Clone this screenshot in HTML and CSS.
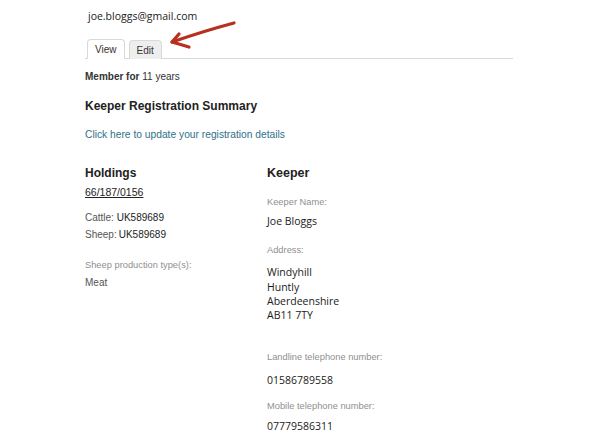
FILE: index.html
```html
<!DOCTYPE html>
<html>
<head>
<meta charset="utf-8">
<link rel="stylesheet" href="styles.css">
</head>
<body>
<div class="page">
  <div class="email">joe.bloggs@gmail.com</div>
  <div class="tabs">
    <span class="tab active">View</span>
    <span class="tab">Edit</span>
  </div>
  <svg class="arrow" width="80" height="40" viewBox="0 0 80 40">
    <path d="M70 9 Q40 17 8 28" fill="none" stroke="#b8301e" stroke-width="3.2" stroke-linecap="round"/>
    <path d="M15 20 L8 28 L25 33" fill="none" stroke="#b8301e" stroke-width="3.2" stroke-linecap="round" stroke-linejoin="round"/>
  </svg>
  <div class="member"><b>Member for</b> 11 years</div>
  <h2 class="summary">Keeper Registration Summary</h2>
  <a class="update" href="#">Click here to update your registration details</a>
  <div class="cols">
    <div class="col holdings">
      <h3 class="colhead">Holdings</h3>
      <div class="holding"><u>66/187/0156</u></div>
      <div class="herd"><span class="lab">Cattle:</span> UK589689</div>
      <div class="herd"><span class="lab tight">Sheep:</span>UK589689</div>
      <div class="label prod">Sheep production type(s):</div>
      <div class="meat">Meat</div>
    </div>
    <div class="col keeper">
      <h3 class="colhead">Keeper</h3>
      <div class="label first">Keeper Name:</div>
      <div class="value name">Joe Bloggs</div>
      <div class="label">Address:</div>
      <div class="value address">Windyhill<br>Huntly<br>Aberdeenshire<br>AB11 7TY</div>
      <div class="label landline">Landline telephone number:</div>
      <div class="value landnum">01586789558</div>
      <div class="label mobile">Mobile telephone number:</div>
      <div class="value">07779586311</div>
    </div>
  </div>
</div>
</body>
</html>
```
FILE: styles.css
```css
html, body {
  margin: 0;
  padding: 0;
  background: #ffffff;
}
body {
  font-family: "Liberation Sans", Arial, sans-serif;
  color: #333333;
}
.page {
  position: relative;
  margin-left: 85px;
  width: 428px;
}
.email {
  font-family: "Open Sans", "Noto Sans", sans-serif;
  font-size: 10.5px;
  color: #222222;
  padding-left: 3px;
  padding-top: 7px;
  line-height: 18px;
  height: 18px;
}
.tabs {
  display: flex;
  gap: 4px;
  margin-top: 14px;
  padding-left: 2px;
  border-bottom: 1px solid #d8d8d8;
  height: 19px;
  align-items: flex-end;
}
.tab {
  font-size: 10px;
  color: #333;
  height: 18px;
  line-height: 19px;
  padding: 0 7px;
  border: 1px solid #d9d9d9;
  border-bottom: none;
  border-radius: 4px 4px 0 0;
  background: #eeeeee;
  margin-bottom: -1px;
}
.tab.active {
  background: #ffffff;
  height: 19px;
}
.arrow {
  position: absolute;
  left: 79px;
  top: 14px;
}
.member {
  font-size: 10px;
  color: #333;
  margin-top: 12px;
  line-height: 12px;
}
.member b {
  font-weight: bold;
}
.summary {
  font-size: 12px;
  font-weight: bold;
  color: #222;
  margin: 0;
  margin-top: 16px;
  line-height: 14px;
}
.update {
  display: block;
  font-size: 10.25px;
  color: #2f7189;
  text-decoration: none;
  margin-top: 16px;
  line-height: 12px;
}
.cols {
  display: flex;
  margin-top: 25px;
}
.col.holdings {
  width: 182px;
}
.col.keeper {
  flex: 1;
}
.colhead {
  font-size: 12.5px;
  font-weight: bold;
  color: #222;
  margin: 0;
  line-height: 14px;
}
.holdings .colhead {
  font-size: 12px;
}
.holding {
  font-size: 10.5px;
  color: #222;
  margin-top: 6px;
  line-height: 12px;
}
.herd {
  font-size: 10px;
  color: #222;
  line-height: 17px;
}
.holding + .herd {
  margin-top: 11px;
}
.herd .lab {
  color: #555;
}
.herd .lab.tight {
  margin-right: 2px;
}
.label {
  font-size: 9.3px;
  color: #8f8f8f;
  line-height: 12px;
}
.prod {
  margin-top: 16px;
}
.meat {
  font-size: 10px;
  color: #555;
  margin-top: 6px;
  line-height: 12px;
}
.keeper .label {
  margin-top: 16px;
}
.keeper .label.first {
  margin-top: 16px;
}
.keeper .label.landline {
  margin-top: 29px;
}
.keeper .label.mobile {
  margin-top: 12px;
}
.value {
  font-family: "Open Sans", "Noto Sans", sans-serif;
  font-size: 10.5px;
  color: #1a1a1a;
  margin-top: 7px;
  line-height: 14.3px;
}
.value.name {
  margin-top: 6px;
}
.value.address {
  margin-top: 9px;
}
.value.landnum {
  margin-top: 10px;
}
```
